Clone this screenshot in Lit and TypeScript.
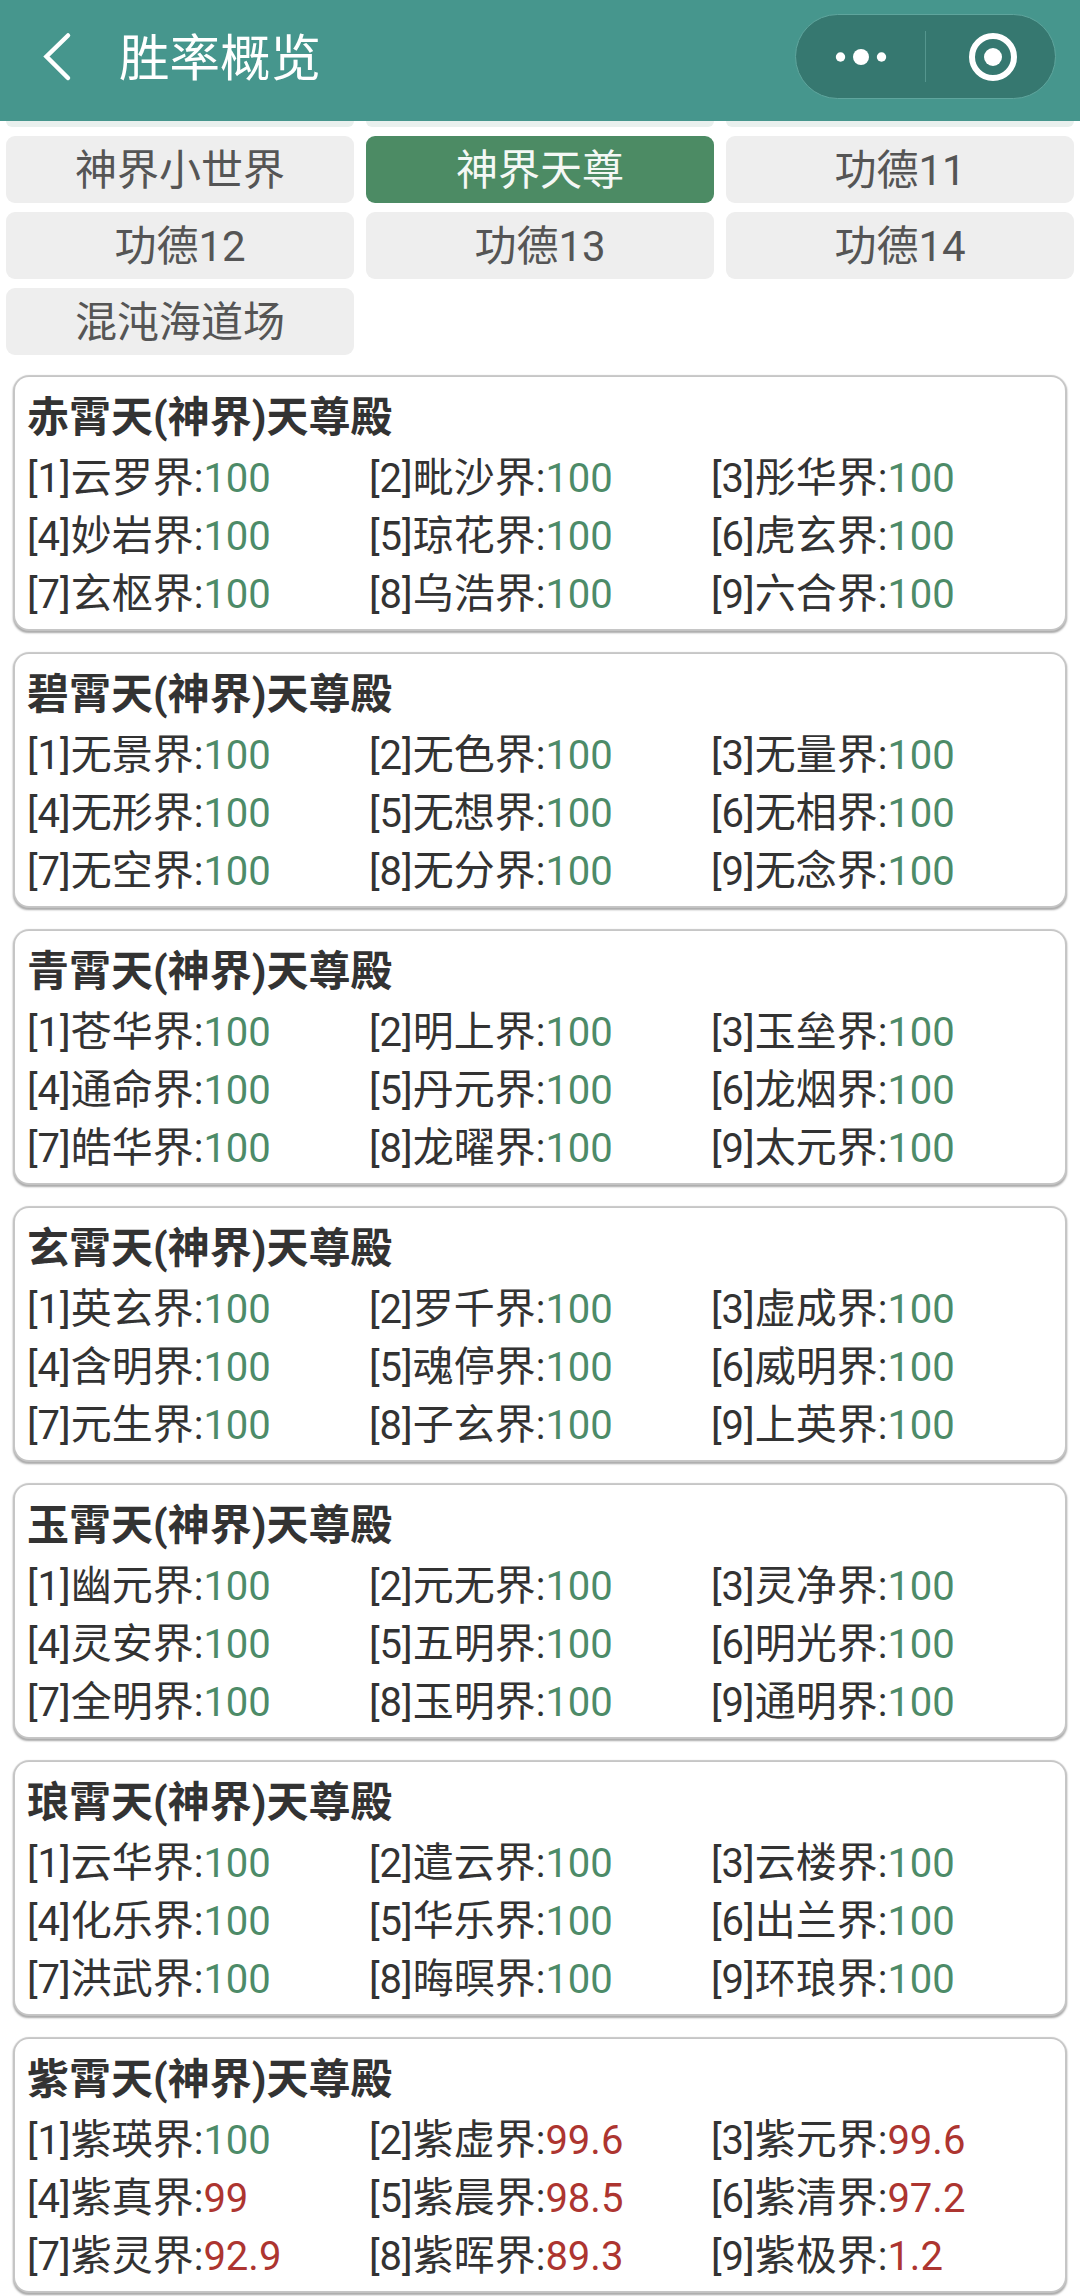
import { LitElement, html, css } from "lit";
import { customElement } from "lit/decorators.js";

const tabs = ["神界小世界", "神界天尊", "功德11", "功德12", "功德13", "功德14", "混沌海道场"];
const cards: { title: string; names: string[]; vals?: string[] }[] = [
  { title: "赤霄天(神界)天尊殿", names: ["云罗界", "毗沙界", "彤华界", "妙岩界", "琼花界", "虎玄界", "玄枢界", "乌浩界", "六合界"] },
  { title: "碧霄天(神界)天尊殿", names: ["无景界", "无色界", "无量界", "无形界", "无想界", "无相界", "无空界", "无分界", "无念界"] },
  { title: "青霄天(神界)天尊殿", names: ["苍华界", "明上界", "玉垒界", "通命界", "丹元界", "龙烟界", "皓华界", "龙曜界", "太元界"] },
  { title: "玄霄天(神界)天尊殿", names: ["英玄界", "罗千界", "虚成界", "含明界", "魂停界", "威明界", "元生界", "子玄界", "上英界"] },
  { title: "玉霄天(神界)天尊殿", names: ["幽元界", "元无界", "灵净界", "灵安界", "五明界", "明光界", "全明界", "玉明界", "通明界"] },
  { title: "琅霄天(神界)天尊殿", names: ["云华界", "遣云界", "云楼界", "化乐界", "华乐界", "出兰界", "洪武界", "晦暝界", "环琅界"] },
  {
    title: "紫霄天(神界)天尊殿",
    names: ["紫瑛界", "紫虚界", "紫元界", "紫真界", "紫晨界", "紫清界", "紫灵界", "紫晖界", "紫极界"],
    vals: ["100", "99.6", "99.6", "99", "98.5", "97.2", "92.9", "89.3", "1.2"],
  },
];

@customElement("app-root")
export class AppRoot extends LitElement {
  static styles = css`
    :host {
      display: block;
      width: 1080px;
      height: 2296px;
      overflow: hidden;
      background: #fff;
      font-family: Roboto, "Noto Sans CJK SC", sans-serif;
      color: #333;
    }
    .nav {
      height: 121px;
      background: #46968d;
      display: flex;
      align-items: flex-start;
      color: #fff;
    }
    .back {
      width: 42px;
      height: 60px;
      margin: 28px 0 0 38px;
      flex: none;
    }
    .nav-title {
      font-size: 50.5px;
      line-height: 60px;
      margin: 29px 0 0 39px;
      flex: 1;
    }
    .capsule {
      box-sizing: border-box;
      width: 261px;
      height: 85px;
      margin: 14px 24px 0 0;
      border-radius: 43px;
      background: #367870;
      border: 1.5px solid #5fa59d;
      display: flex;
      align-items: center;
      flex: none;
    }
    .cap-l {
      width: 129px;
      display: flex;
      justify-content: center;
    }
    .cap-sep {
      width: 1px;
      height: 51px;
      background: #55968e;
    }
    .cap-r {
      flex: 1;
      display: flex;
      justify-content: center;
      padding-left: 4px;
    }
    .sliver {
      display: grid;
      grid-template-columns: repeat(3, 348px);
      gap: 12px;
      padding-left: 6px;
    }
    .sliver div {
      height: 6px;
      background: #e9f0ee;
      border-radius: 0 0 8px 8px;
    }
    .tabs {
      display: grid;
      grid-template-columns: repeat(3, 348px);
      grid-auto-rows: 67px;
      gap: 9px 12px;
      padding: 9px 0 0 6px;
    }
    .tab {
      box-sizing: border-box;
      background: #eee;
      color: #555;
      border-radius: 9px;
      font-size: 42px;
      line-height: 64px;
      padding-top: 3px;
      text-align: center;
    }
    .tab.on {
      background: #4c8b64;
      color: #f4f8f5;
    }
    .cards {
      display: flex;
      flex-direction: column;
      gap: 25px;
      padding: 22px 15px 0;
    }
    .card {
      box-sizing: border-box;
      height: 252px;
      background: #fff;
      border-radius: 14px;
      box-shadow: 0 0 1px 2px #c6c6c6, 0 2px 2px 1.5px #a8a8a8;
      padding: 11px 0 0 12px;
    }
    .title {
      font-size: 42px;
      font-weight: 700;
      line-height: 60px;
      margin-bottom: 1px;
      color: #333;
    }
    .grid {
      display: grid;
      grid-template-columns: repeat(3, 342px);
      grid-auto-rows: 58px;
    }
    .cell {
      font-size: 40px;
      line-height: 58px;
      color: #333;
      white-space: nowrap;
    }
    .name {
      font-size: 41px;
    }
    .ok {
      color: #4d8b68;
    }
    .low {
      color: #ad3530;
    }
  `;

  render() {
    return html`
      <div class="nav">
        <svg class="back" viewBox="0 0 42 60">
          <path d="M30 7.5 L8.5 28.5 L30 50" fill="none" stroke="#fff" stroke-width="4.5" stroke-linecap="round" />
        </svg>
        <div class="nav-title">胜率概览</div>
        <div class="capsule">
          <div class="cap-l">
            <svg width="52" height="20" viewBox="0 0 52 20">
              <circle cx="5.5" cy="10" r="4.7" fill="#fff" />
              <circle cx="26" cy="10" r="8" fill="#fff" />
              <circle cx="46.5" cy="10" r="4.7" fill="#fff" />
            </svg>
          </div>
          <div class="cap-sep"></div>
          <div class="cap-r">
            <svg width="50" height="50" viewBox="0 0 50 50">
              <circle cx="25" cy="25" r="21" fill="none" stroke="#fff" stroke-width="6" />
              <circle cx="25" cy="25" r="9" fill="#fff" />
            </svg>
          </div>
        </div>
      </div>
      <div class="sliver"><div></div><div></div><div></div></div>
      <div class="tabs">
        ${tabs.map((t) => html`<div class="tab ${t === "神界天尊" ? "on" : ""}">${t}</div>`)}
      </div>
      <div class="cards">
        ${cards.map(
          (c) => html`<div class="card">
            <div class="title">${c.title}</div>
            <div class="grid">
              ${c.names.map((n, i) => {
                const v = c.vals ? c.vals[i] : "100";
                return html`<div class="cell">[${i + 1}]<span class="name">${n}</span>:<span class="${v === "100" ? "ok" : "low"}">${v}</span></div>`;
              })}
            </div>
          </div>`
        )}
      </div>
    `;
  }
}
